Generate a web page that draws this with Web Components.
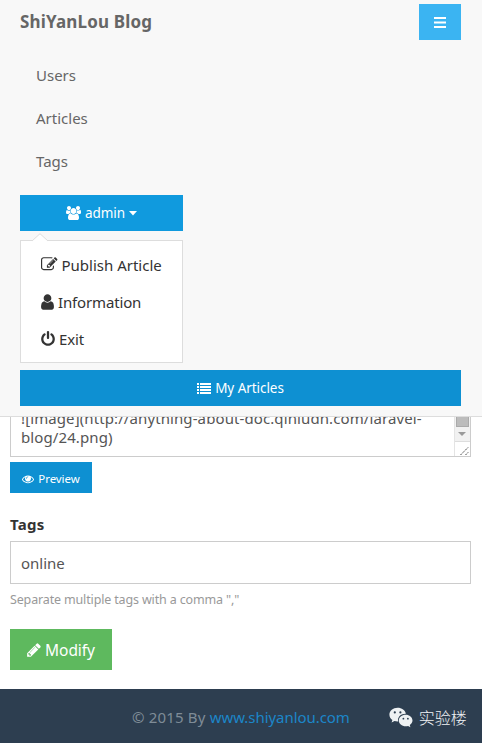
<!DOCTYPE html>
<html lang="en"><head><meta charset="utf-8"><title>ShiYanLou Blog</title>
<style>
body{margin:0;background:#fff;font-family:"Noto Sans","Noto Sans CJK SC",sans-serif;font-size:15px;color:#666;width:482px;height:743px;overflow:hidden}
</style></head><body>
<blog-page></blog-page>
<script>
const FA={
edit:["0 0 1792 1792","M888 1184l116-116-152-152-116 116v56h96v96h56zm440-720q-16-16-33 1l-350 350q-17 17-1 33t33-1l350-350q17-17 1-33zm80 594v190q0 119-84.5 203.5t-203.5 84.5h-832q-119 0-203.5-84.5t-84.5-203.5v-832q0-119 84.5-203.5t203.5-84.5h832q63 0 117 25 15 7 18 23 3 17-9 29l-49 49q-14 14-32 8-23-6-45-6h-832q-66 0-113 47t-47 113v832q0 66 47 113t113 47h832q66 0 113-47t47-113v-126q0-13 9-22l64-64q15-15 35-7t20 29zm-96-738l288 288-672 672h-288v-288zm444 132l-92 92-288-288 92-92q28-28 68-28t68 28l152 152q28 28 28 68t-28 68z"],
user:["256 0 1280 1792","M1536 1399q0 109-62.5 187t-150.5 78h-854q-88 0-150.5-78t-62.5-187q0-85 8.5-160.5t31.5-152 58.5-131 94-89 134.5-34.5q131 128 313 128t313-128q76 0 134.5 34.5t94 89 58.5 131 31.5 152 8.5 160.5zm-256-887q0 159-112.5 271.5t-271.5 112.5-271.5-112.5-112.5-271.5 112.5-271.5 271.5-112.5 271.5 112.5 112.5 271.5z"],
power:["128 0 1536 1792","M1664 896q0 156-61 298t-164 245-245 164-298 61-298-61-245-164-164-245-61-298q0-182 80.5-343t226.5-270q43-32 95.5-25t83.5 50q32 42 24.5 94.5t-49.5 84.5q-98 74-151.5 181t-53.5 228q0 104 40.5 198.5t109.5 163.5 163.5 109.5 198.5 40.5 198.5-40.5 163.5-109.5 109.5-163.5 40.5-198.5q0-121-53.5-228t-151.5-181q-42-32-49.5-84.5t24.5-94.5q31-43 84-50t95 25q146 109 226.5 270t80.5 343zm-640-768v640q0 52-38 90t-90 38-90-38-38-90v-640q0-52 38-90t90-38 90 38 38 90z"],
eye:["0 0 1792 1792","M1664 960q-152-236-381-353 61 104 61 225 0 185-131.5 316.5t-316.5 131.5-316.5-131.5-131.5-316.5q0-121 61-225-229 117-381 353 133 205 333.5 326.5t434.5 121.5 434.5-121.5 333.5-326.5zm-720-384q0-20-14-34t-34-14q-125 0-214.5 89.5t-89.5 214.5q0 20 14 34t34 14 34-14 14-34q0-86 61-147t147-61q20 0 34-14t14-34zm848 384q0 34-20 69-140 230-376.5 368.5t-499.5 138.5-499.5-139-376.5-368q-20-35-20-69t20-69q140-229 376.5-368t499.5-139 499.5 139 376.5 368q20 35 20 69z"],
pencil:["128 0 1536 1792","M491 1536l91-91-235-235-91 91v107h128v128h107zm523-928q0-22-22-22-10 0-17 7l-542 542q-7 7-7 17 0 22 22 22 10 0 17-7l542-542q7-7 7-17zm-54-192l416 416-832 832h-416v-416zm683 96q0 53-37 90l-166 166-416-416 166-165q36-38 90-38 53 0 91 38l235 234q37 39 37 91z"],
users:["-64 0 1920 1792","M529 896q-162 5-265 128h-134q-82 0-138-40.5t-56-118.5q0-353 124-353 6 0 43.5 21t97.5 42.5 119 21.5q67 0 133-23-5 37-5 66 0 159 90 293zm1071 637q0 120-73 189.5t-194 69.5h-874q-121 0-194-69.5t-73-189.5q0-53 3.5-103.5t14-109 26.5-108.5 43-97.5 62-81 85.5-53.5 111.5-20q10 0 43 21.5t73 48 107 48 135 21.5 135-21.5 107-48 73-48 43-21.5q61 0 111.5 20t85.5 53.5 62 81 43 97.5 26.5 108.5 14 109 3.5 103.5zm-1024-1277q0 106-75 181t-181 75-181-75-75-181 75-181 181-75 181 75 75 181zm704 384q0 159-112.5 271.5t-271.5 112.5-271.5-112.5-112.5-271.5 112.5-271.5 271.5-112.5 271.5 112.5 112.5 271.5zm576 225q0 78-56 118.5t-138 40.5h-134q-103-123-265-128 90-134 90-293 0-29-5-66 66 23 133 23 59 0 119-21.5t97.5-42.5 43.5-21q124 0 124 353zm-128-609q0 106-75 181t-181 75-181-75-75-181 75-181 181-75 181 75 75 181z"],
bars:["0 0 12 11","M0 0h12v2H0zM0 4.5h12v2H0zM0 9h12v2H0z"],
list:["0 0 14 11","M0 0h2v2H0zM3 0h11v2H3zM0 3h2v2H0zM3 3h11v2H3zM0 6h2v2H0zM3 6h11v2H3zM0 9h2v2H0zM3 9h11v2H3z"],
caret:["0 0 8 5","M0 0h8L4 4.6z"],
wechat:["0 0 24 22","M8.600.8C4 .8.4 3.900.4 7.700c0 2.200 1.200 4.100 3 5.400l-.8 2.500 2.900-1.500c1 .3 2 .5 3.100.5h.6a6.300 6.300 0 0 1-.2-1.500c0-3.600 3.300-6.400 7.400-6.400h.5C16.200 3.300 12.700.8 8.600.8zM5.800 4.300a1.100 1.100 0 1 1 0 2.200 1.100 1.100 0 0 1 0-2.200zm5.600 0a1.100 1.100 0 1 1 0 2.200 1.100 1.100 0 0 1 0-2.200zM16.700 7.700c-3.900 0-6.900 2.600-6.900 5.800s3 5.800 6.900 5.800c.8 0 1.600-.1 2.400-.4l2.300 1.300-.6-2.200c1.600-1.100 2.700-2.700 2.700-4.500 0-3.200-3.100-5.800-6.800-5.800zm-2.300 3.100a.9.9 0 1 1 0 1.800.9.9 0 0 1 0-1.800zm4.500 0a.9.900 0 1 1 0 1.800.9.9 0 0 1 0-1.800z"]
};
function define(name,html){
  const t=document.createElement('template');t.innerHTML=html;
  customElements.define(name,class extends HTMLElement{
    constructor(){super();this.attachShadow({mode:'open'}).append(t.content.cloneNode(true));}
  });
}
customElements.define('fa-icon',class extends HTMLElement{
  connectedCallback(){
    const [vb,d]=FA[this.getAttribute('name')];
    const [w,h]=this.getAttribute('size').split('x');
    if(!this.shadowRoot)this.attachShadow({mode:'open'});
    this.shadowRoot.innerHTML=`<style>:host{display:inline-flex;flex:none}svg{display:block;overflow:visible}</style><svg width="${w}" height="${h}" viewBox="${vb}" fill="currentColor"><path d="${d}"/></svg>`;
  }
});
define('ui-button',`<style>:host{display:flex;align-items:center;justify-content:center;gap:4px;box-sizing:border-box;height:36px;background:#0e90d2;color:#fff;font-size:13.500px;line-height:20px;letter-spacing:-.05px;white-space:nowrap}</style><slot></slot>`);
define('nav-link',`<style>:host{display:block;height:43px;line-height:43px;padding-left:16px;font-size:15px;color:#666}</style><slot></slot>`);
define('menu-item',`<style>:host{display:flex;align-items:center;gap:4px;height:37px;padding-left:20px;font-size:15px;color:#333;white-space:nowrap}</style><slot></slot>`);
define('drop-menu',`<style>:host{display:block;position:relative;box-sizing:border-box;width:163px;height:123px;border:1px solid #ddd;background:#fff;padding-top:5px}
.tip{position:absolute;left:11px;top:-8px}</style><svg class="tip" width="16" height="9"><path d="M0 9V8L8 .7 16 8v1z" fill="#fff"/><path d="M0 8L8 .7 16 8" fill="none" stroke="#ddd"/></svg><slot></slot>`);
define('top-bar',`<style>:host{display:flex;flex-direction:column;box-sizing:border-box;height:417px;padding:4px 21px 0 20px;background:#f8f8f8;border-bottom:1px solid #ddd}
header{display:flex;justify-content:space-between;height:50px}
b{font-size:17px;line-height:36px;letter-spacing:.17px}
nav{height:141px}
.toggle{width:42px;background:#3bb4f2}
.admin{width:163px;background:#109ade}
drop-menu{margin-top:9px}
.mine{margin-top:7px}
.info{letter-spacing:-.15px}
</style>
<header><b>ShiYanLou Blog</b><ui-button class="toggle"><fa-icon name="bars" size="12x11"></fa-icon></ui-button></header>
<nav><nav-link>Users</nav-link><nav-link>Articles</nav-link><nav-link>Tags</nav-link></nav>
<ui-button class="admin"><fa-icon name="users" size="15x14"></fa-icon><span>admin</span><fa-icon name="caret" size="8x5"></fa-icon></ui-button>
<drop-menu>
<menu-item><fa-icon name="edit" size="16.500x16.500"></fa-icon><span>Publish Article</span></menu-item>
<menu-item><fa-icon name="user" size="13x18"></fa-icon><span class="info">Information</span></menu-item>
<menu-item><fa-icon name="power" size="14x16"></fa-icon><span class="info">Exit</span></menu-item>
</drop-menu>
<ui-button class="mine"><fa-icon name="list" size="14x11"></fa-icon><span>My Articles</span></ui-button>`);
define('text-area',`<style>:host{display:flex;box-sizing:border-box;height:40px;border:1px solid #ccc;border-top:0;overflow:hidden;color:#555}
.t{flex:1;display:flex;flex-direction:column;justify-content:flex-end;padding:0 0 9px 10px;font-size:15px;line-height:19px;letter-spacing:.1px;white-space:nowrap}
.bar{width:15px;display:flex;flex-direction:column;background:#f1f1f1;border-left:1px solid #e4e4e4}
.thumb{height:10px;margin:0 1px;background:#bcbcbc;flex:none;border:solid #aaa;border-width:0 1px 1px;box-sizing:border-box}
svg{display:block}</style>
<div class="t"><div>![image](http://anything-about-doc.qiniudn.com/laravel-</div><div>blog/24.png)</div></div>
<div class="bar"><div class="thumb"></div><svg width="15" height="29"><path d="M3 5h8L7 9z" fill="#999"/><path d="M0 14.500h15" stroke="#ddd"/><path d="M0 15h15v14H0z" fill="#fff"/><path d="M5.500 28l8-8M10.500 28l3-3" stroke="#444" stroke-dasharray="1.500 .8"/></svg></div>`);
define('edit-form',`<style>:host{display:flex;flex-direction:column;height:272px;padding:0 11px 0 10px}
.preview{width:82px;height:31px;margin-top:5px;padding-top:2px;font-size:11.500px}
label{font-weight:700;color:#333;font-size:15px;line-height:24px;margin-top:19px;letter-spacing:.25px}
.input{box-sizing:border-box;height:43px;margin-top:5px;border:1px solid #ccc;padding-left:10px;line-height:42px;color:#555}
small{font-size:12.500px;line-height:20px;margin-top:6px;letter-spacing:-.15px;color:#999}
.modify{width:102px;height:41px;margin-top:19px;padding-top:1px;background:#5eb95e;font-size:15.500px}
</style><text-area></text-area>
<ui-button class="preview"><fa-icon name="eye" size="12x12"></fa-icon><span>Preview</span></ui-button>
<label>Tags</label><div class="input">online</div><small><span>Separate multiple tags with a comma ","</span></small>
<ui-button class="modify"><fa-icon name="pencil" size="14x16"></fa-icon><span>Modify</span></ui-button>`);
define('page-footer',`<style>:host{display:flex;align-items:center;box-sizing:border-box;height:54px;padding:2px 0 0 132px;background:#2d3e50;color:#7f8c97;font-size:15px;white-space:pre}
.c{letter-spacing:.18px}a{color:#1c86c8;letter-spacing:-.05px}.wx{display:flex;align-items:center;gap:6px;margin-left:39px;color:#f0f2f4;font-size:16px;font-weight:300}
fa-icon{color:#eef1f3;padding-top:2px}</style><span class="c">© 2015 By <a>www.shiyanlou.com</a></span><div class="wx"><fa-icon name="wechat" size="24x22"></fa-icon><span>实验楼</span></div>`);
define('blog-page',`<style>:host{display:flex;flex-direction:column;width:482px;height:743px}top-bar,edit-form,page-footer{flex:none}</style><top-bar></top-bar><edit-form></edit-form><page-footer></page-footer>`);
</script></body></html>
